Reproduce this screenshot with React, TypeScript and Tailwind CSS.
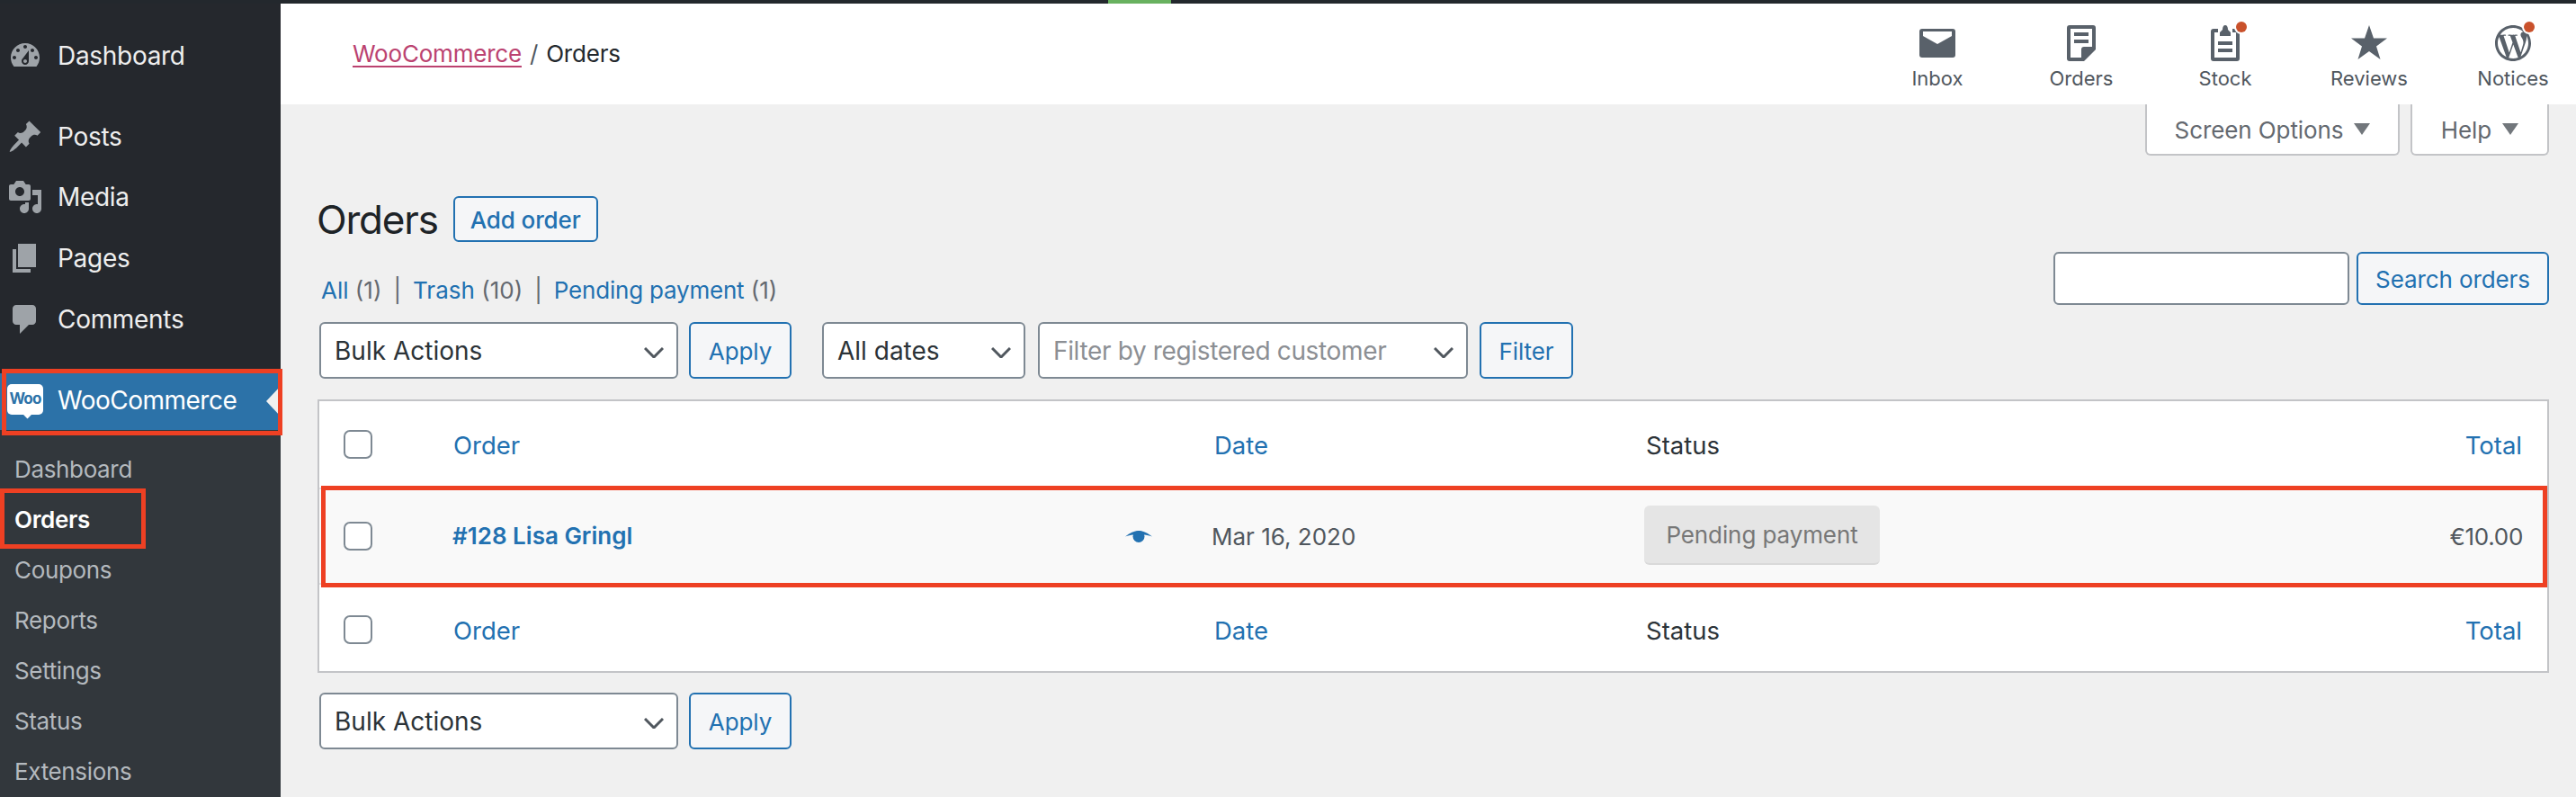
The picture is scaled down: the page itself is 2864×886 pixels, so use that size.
const font = "font-['Inter',sans-serif]";

const Dash = ({ d }: { d: string }) => (
  <svg viewBox="0 0 20 20" className="w-[40px] h-[40px] fill-[#9ea3a8] shrink-0" fillRule="evenodd">
    <path d={d} />
  </svg>
);

const mainMenu = [
  {
    label: "Posts",
    d: "M10.44 3.02l1.82-1.82 6.36 6.35-1.83 1.82c-1.05-.68-2.48-.57-3.41.36l-.75.75c-.92.93-1.04 2.35-.35 3.41l-1.83 1.82-2.41-2.41-2.8 2.79c-.42.42-3.38 2.71-3.8 2.29s1.86-3.39 2.28-3.81l2.79-2.79L4.1 9.36l1.83-1.82c1.05.69 2.48.57 3.4-.36l.75-.75c.93-.92 1.05-2.35.36-3.41z",
  },
  {
    label: "Media",
    d: "M13 11V4c0-.55-.45-1-1-1h-1.67L9 1H5L3.67 3H2c-.55 0-1 .45-1 1v7c0 .55.45 1 1 1h10c.55 0 1-.45 1-1zM7 4.5c1.38 0 2.5 1.12 2.5 2.5S8.38 9.5 7 9.5 4.5 8.38 4.5 7 5.62 4.5 7 4.5zM14 6h5v10.5c0 1.38-1.12 2.5-2.5 2.5S14 17.88 14 16.5s1.12-2.5 2.5-2.5c.17 0 .34.02.5.05V9h-3V6zm-4 8.05V13h2v3.5c0 1.38-1.12 2.5-2.5 2.5S7 17.88 7 16.5 8.12 14 9.5 14c.17 0 .34.02.5.05z",
  },
  { label: "Pages", d: "M6 15V2h10v13H6zm-1 1h8v2H3V5h2v11z" },
  {
    label: "Comments",
    d: "M5 2h9c1.1 0 2 .9 2 2v7c0 1.1-.9 2-2 2h-2l-5 5v-5H5c-1.1 0-2-.9-2-2V4c0-1.1.9-2 2-2z",
  },
];

const dashboardIcon =
  "M3.76 16h12.48c1.1-1.37 1.76-3.11 1.76-5 0-4.42-3.58-8-8-8s-8 3.58-8 8c0 1.89.66 3.63 1.76 5zM10 4c.55 0 1 .45 1 1s-.45 1-1 1-1-.45-1-1 .45-1 1-1zM6 6c.55 0 1 .45 1 1s-.45 1-1 1-1-.45-1-1 .45-1 1-1zm8 0c.55 0 1 .45 1 1s-.45 1-1 1-1-.45-1-1 .45-1 1-1zm-5.37 5.55L12 7v6c0 1.1-.9 2-2 2s-2-.9-2-2c0-.57.24-1.08.63-1.45zM4 10c.55 0 1 .45 1 1s-.45 1-1 1-1-.45-1-1 .45-1 1-1zm12 0c.55 0 1 .45 1 1s-.45 1-1 1-1-.45-1-1 .45-1 1-1zm-5 3c0-.55-.45-1-1-1s-1 .45-1 1 .45 1 1 1 1-.45 1-1z";

const MenuItem = ({ label, d }: { label: string; d: string }) => (
  <div className="flex items-center h-[68px] pl-[8px] gap-[16px] text-[28px] tracking-[-0.3px] text-[#eeeeee]">
    <Dash d={d} />
    <span>{label}</span>
  </div>
);

const Sidebar = () => (
  <aside className="relative z-10 w-[312px] shrink-0 bg-[#25282d] flex flex-col">
    <div className="mt-[24px] mb-[22px]">
      <MenuItem label="Dashboard" d={dashboardIcon} />
    </div>
    {mainMenu.map((m) => (
      <MenuItem key={m.label} {...m} />
    ))}
    <div className="relative mt-[27px] h-[63px] bg-[#2c72a8] flex items-center pl-[8px] gap-[16px] text-[28px] tracking-[-0.5px] text-white">
      <div className="relative w-[40px] h-[34px] mb-[6px] bg-white rounded-[5px] flex items-center justify-center text-[#2c72a8] text-[17px] font-bold tracking-[-0.8px]">
        Woo
        <span className="absolute left-[19px] -bottom-[3px] w-[7px] h-[7px] bg-white rotate-45" />
      </div>
      <span className="mb-[3px]">WooCommerce</span>
      <span className="absolute right-0 top-[14px] border-y-[17px] border-y-transparent border-r-[16px] border-r-[#f0f0f0]" />
      <span className="absolute -top-[5px] -bottom-[6px] left-[2px] w-[312px] border-[5px] border-[#ee4023]" />
    </div>
    <div className="flex-1 bg-[#32373c] pt-[16px] text-[26px] tracking-[-0.35px] text-[#b4b9be]">
      <div className="h-[56px] leading-[56px] pl-[16px]">Dashboard</div>
      <div className="relative h-[56px] leading-[56px] pl-[16px] font-semibold text-white">
        Orders
        <span className="absolute -top-[7px] -bottom-[4px] left-0 w-[162px] border-[5px] border-[#ee4023]" />
      </div>
      {["Coupons", "Reports", "Settings", "Status", "Extensions"].map((s) => (
        <div key={s} className="h-[56px] leading-[56px] pl-[16px]">
          {s}
        </div>
      ))}
    </div>
  </aside>
);

const InboxIcon = () => (
  <svg viewBox="0 0 40 40" className="w-[40px] h-[40px]">
    <path d="M3 4h34a3 3 0 0 1 3 3v26a3 3 0 0 1-3 3H3a3 3 0 0 1-3-3V7a3 3 0 0 1 3-3z" fill="#59616a" />
    <path d="M4 7h32v5L20 21 4 12z" fill="#fff" />
  </svg>
);

const OrdersIcon = () => (
  <svg viewBox="0 0 32 40" className="w-[32px] h-[40px]" fillRule="evenodd">
    <path
      d="M3 0h26a3 3 0 0 1 3 3v24L19 40H3a3 3 0 0 1-3-3V3a3 3 0 0 1 3-3zM4 4v32h12v-9a3 3 0 0 1 3-3h9V4zM8 8h16v4H8zM8 16h16v4H8z"
      fill="#59616a"
    />
  </svg>
);

const StockIcon = () => (
  <svg viewBox="0 0 32 40" className="w-[32px] h-[40px]" fillRule="evenodd">
    <path
      d="M3 4h5v4H4v28h24V8h-4V4h5a3 3 0 0 1 3 3v30a3 3 0 0 1-3 3H3a3 3 0 0 1-3-3V7a3 3 0 0 1 3-3zM16 0c2 0 3 2 3 5l3 3v4H10V8l3-3c0-3 1-5 3-5zM8 18h16v4H8zM8 26h16v4H8z"
      fill="#59616a"
    />
  </svg>
);

const StarIcon = () => (
  <svg viewBox="0 0 40 38" className="w-[40px] h-[38px]">
    <path d="M20 0l5 14.500h15L28 23.500 32.500 38 20 29 7.500 38 12 23.500 0 14.500h15z" fill="#59616a" />
  </svg>
);

const WpIcon = () => (
  <svg viewBox="0 0 24 24" className="w-[48px] h-[48px] -m-[4px]">
    <path
      fill="#59616a"
      d="M12 2C6.477 2 2 6.477 2 12s4.477 10 10 10 10-4.477 10-10S17.523 2 12 2zM3.500 12c0-1.232.264-2.402.736-3.460L8.290 19.650C5.456 18.272 3.500 15.365 3.500 12zm8.500 8.500c-.834 0-1.640-.120-2.400-.345l2.550-7.410 2.613 7.157c.017.042.038.080.060.117-.884.310-1.833.480-2.823.480zm1.172-12.485c.512-.027.973-.080.973-.080.458-.055.404-.728-.054-.702 0 0-1.376.108-2.265.108-.835 0-2.240-.108-2.240-.108-.458-.026-.510.674-.053.700 0 0 .434.055.892.082l1.324 3.630-1.860 5.578-3.096-9.208c.512-.027.973-.080.973-.080.458-.055.403-.728-.055-.702 0 0-1.376.108-2.265.108-.160 0-.347-.003-.547-.010C6.418 5.025 9.030 3.500 12 3.500c2.213 0 4.228.846 5.740 2.232-.037-.002-.072-.007-.110-.007-.835 0-1.427.727-1.427 1.510 0 .700.404 1.292.835 1.993.323.566.700 1.293.700 2.344 0 .727-.280 1.572-.646 2.748l-.848 2.833-3.072-9.138zm3.100 11.332l2.597-7.506c.484-1.212.645-2.180.645-3.044 0-.313-.020-.603-.057-.874.664 1.210 1.042 2.600 1.042 4.078 0 3.136-1.700 5.874-4.227 7.347z"
    />
  </svg>
);

const activity = [
  { label: "Inbox", icon: <InboxIcon />, dot: "" },
  { label: "Orders", icon: <OrdersIcon />, dot: "" },
  { label: "Stock", icon: <StockIcon />, dot: "-right-[8px]" },
  { label: "Reviews", icon: <StarIcon />, dot: "" },
  { label: "Notices", icon: <WpIcon />, dot: "-right-[4px]" },
];

const Header = () => (
  <header className="h-[112px] bg-white flex items-center justify-between pl-[80px] pr-[10px]">
    <div className="text-[26px] tracking-[-0.2px] text-[#23282d] flex gap-[9px] mb-[2px]">
      <span className="text-[#bb4270] underline underline-offset-[4px] decoration-2">WooCommerce</span>
      <span className="text-[#50575e]">/</span>
      <span>Orders</span>
    </div>
    <div className="flex gap-[40px] pt-[9px]">
      {activity.map((a) => (
        <div key={a.label} className="w-[120px] flex flex-col items-center text-[22px] leading-[28px] text-[#50575e]">
          <div className="relative h-[40px] flex items-start">
            {a.icon}
            {a.dot && (
              <span className={`absolute -top-[4px] ${a.dot} w-[12px] h-[12px] rounded-full bg-[#c9512b] ring-2 ring-white`} />
            )}
          </div>
          <span className="mt-[5px]">{a.label}</span>
        </div>
      ))}
    </div>
  </header>
);

const Tab = ({ label, w }: { label: string; w: string }) => (
  <div className={`${w} h-[57px] pt-[2px] bg-white border-2 border-t-0 border-[#c3c4c7] rounded-b-[6px] flex items-center justify-center gap-[12px] text-[26px] tracking-[-0.1px] text-[#646970]`}>
    {label}
    <span className="border-x-[9px] border-x-transparent border-t-[13px] border-t-[#72777c] mb-[2px]" />
  </div>
);

const Btn = ({ label, w, className = "" }: { label: string; w: string; className?: string }) => (
  <button className={`${w} h-full pt-[2px] border-2 border-[#2271b1] bg-[#f5f6f8] rounded-[6px] text-[26px] tracking-[-0.1px] text-[#2271b1] ${className}`}>
    {label}
  </button>
);

const Select = ({ value, w, muted }: { value: string; w: string; muted?: boolean }) => (
  <div className={`relative ${w} h-full`}>
    <select
      defaultValue={value}
      className={`w-full h-full appearance-none bg-white border-2 border-[#7e8993] rounded-[6px] pl-[15px] text-[28px] ${muted ? "text-[#8c8f94] tracking-[-0.35px]" : "text-[#2c3338]"}`}
    >
      <option>{value}</option>
    </select>
    <svg viewBox="0 0 22 12" className="absolute right-[16px] top-[28px] w-[22px] h-[12px] fill-none stroke-[#50575e] stroke-[3]">
      <path d="M1 1l10 10L21 1" />
    </svg>
  </div>
);

const Check = () => (
  <span className="block w-[32px] h-[32px] bg-white border-2 border-[#7e8993] rounded-[7px]" />
);

const HeadRow = ({ footer }: { footer?: boolean }) => (
  <div className={`flex items-center h-[96px] text-[27.5px] text-[#2271b1] ${footer ? "pt-[4px]" : ""}`}>
    <div className="w-[150px] pl-[27px]">
      <Check />
    </div>
    <div className="w-[845px] -ml-[1px] mr-[1px] mt-[3px]">Order</div>
    <div className="w-[480px] mt-[3px]">Date</div>
    <div className="flex-1 mt-[3px] text-[#2c3338]">Status</div>
    <div className="pr-[28px] mt-[3px]">Total</div>
  </div>
);

const EyeIcon = () => (
  <svg viewBox="0 0 30 13" className="block w-[30px] h-[13px] fill-[#2271b1]">
    <path d="M0 6.500C5 2.500 10 0 15 0s10 2.500 15 6.500C27 5.500 24 4.500 21 4.500H9C6 4.500 3 5.500 0 6.500z" />
    <circle cx="15" cy="6.500" r="6.500" />
  </svg>
);

const OrderRow = () => (
  <div className="relative flex items-center h-[108px] bg-[#f9f9f9] border-y-2 border-[#e1e2e4] text-[26px]">
    <div className="w-[150px] pl-[27px]">
      <Check />
    </div>
    <div className="w-[748px] -ml-[2px] mb-[2px] font-semibold text-[#2271b1]">#128 Lisa Gringl</div>
    <div className="w-[96px]">
      <EyeIcon />
    </div>
    <div className="w-[481px] text-[#50575e]">Mar 16, 2020</div>
    <div className="flex-1">
      <span className="inline-flex items-center justify-center w-[262px] h-[66px] mt-[-2px] bg-[#e5e5e5] rounded-[6px] border-b-2 border-[#d9d9d9] text-[#777777] tracking-[-0.1px]">
        Pending payment
      </span>
    </div>
    <div className="pr-[27px] text-[#50575e] tracking-[-0.3px]">€10.00</div>
    <span className="absolute -top-[4px] -bottom-[5px] left-[2px] right-0 border-[5px] border-[#ee4023]" />
  </div>
);

const App = () => (
  <div className={`${font} w-[2864px] h-[886px] overflow-hidden bg-[#f0f0f0] flex flex-col`}>
    <div className="h-[4px] bg-[#23282d] shrink-0 relative">
      <span className="absolute left-[1232px] top-0 w-[70px] h-full bg-[#68b15f]" />
    </div>
    <div className="flex flex-1 min-h-0">
      <Sidebar />
      <main className="flex-1 min-w-0">
        <Header />
        <div className="flex justify-end gap-[12px] pr-[30px]">
          <Tab label="Screen Options" w="w-[283px]" />
          <Tab label="Help" w="w-[154px]" />
        </div>
        <div className="pl-[41px] pr-[30px]">
          <div className="flex items-center gap-[17px] h-[51px] mt-[45px]">
            <h1 className="-ml-[1px] text-[44px] tracking-[-1.2px] font-normal text-[#1d2327]">Orders</h1>
            <Btn label="Add order" w="w-[161px]" className="font-medium" />
          </div>
          <div className="flex justify-between items-start h-[78px] mt-[11px]">
            <div className="pl-[4px] pt-[23px] text-[26px] leading-[40px] text-[#646970]">
              <span className="text-[#2271b1]">All</span> (1)
              <span className="mx-[13px]">|</span>
              <span className="text-[#2271b1]">Trash</span> (10)
              <span className="mx-[13px]">|</span>
              <span className="text-[#2271b1] tracking-[-0.2px]">Pending payment</span> (1)
            </div>
            <div className="flex h-[59px] gap-[8px]">
              <input className="w-[329px] h-full bg-white border-2 border-[#7e8993] rounded-[6px]" />
              <Btn label="Search orders" w="w-[214px]" />
            </div>
          </div>
          <div className="flex h-[63px] pl-[2px]">
            <Select value="Bulk Actions" w="w-[399px]" />
            <Btn label="Apply" w="w-[114px]" className="ml-[12px]" />
            <Select value="All dates" w="w-[226px] ml-[34px]" />
            <Select value="Filter by registered customer" w="w-[478px] ml-[14px]" muted />
            <Btn label="Filter" w="w-[104px]" className="ml-[13px]" />
          </div>
          <div className="mt-[23px] bg-white border-2 border-[#c3c4c7]">
            <HeadRow />
            <OrderRow />
            <HeadRow footer />
          </div>
          <div className="flex h-[63px] pl-[2px] mt-[22px]">
            <Select value="Bulk Actions" w="w-[399px]" />
            <Btn label="Apply" w="w-[114px]" className="ml-[12px]" />
          </div>
        </div>
      </main>
    </div>
  </div>
);

export default App;
